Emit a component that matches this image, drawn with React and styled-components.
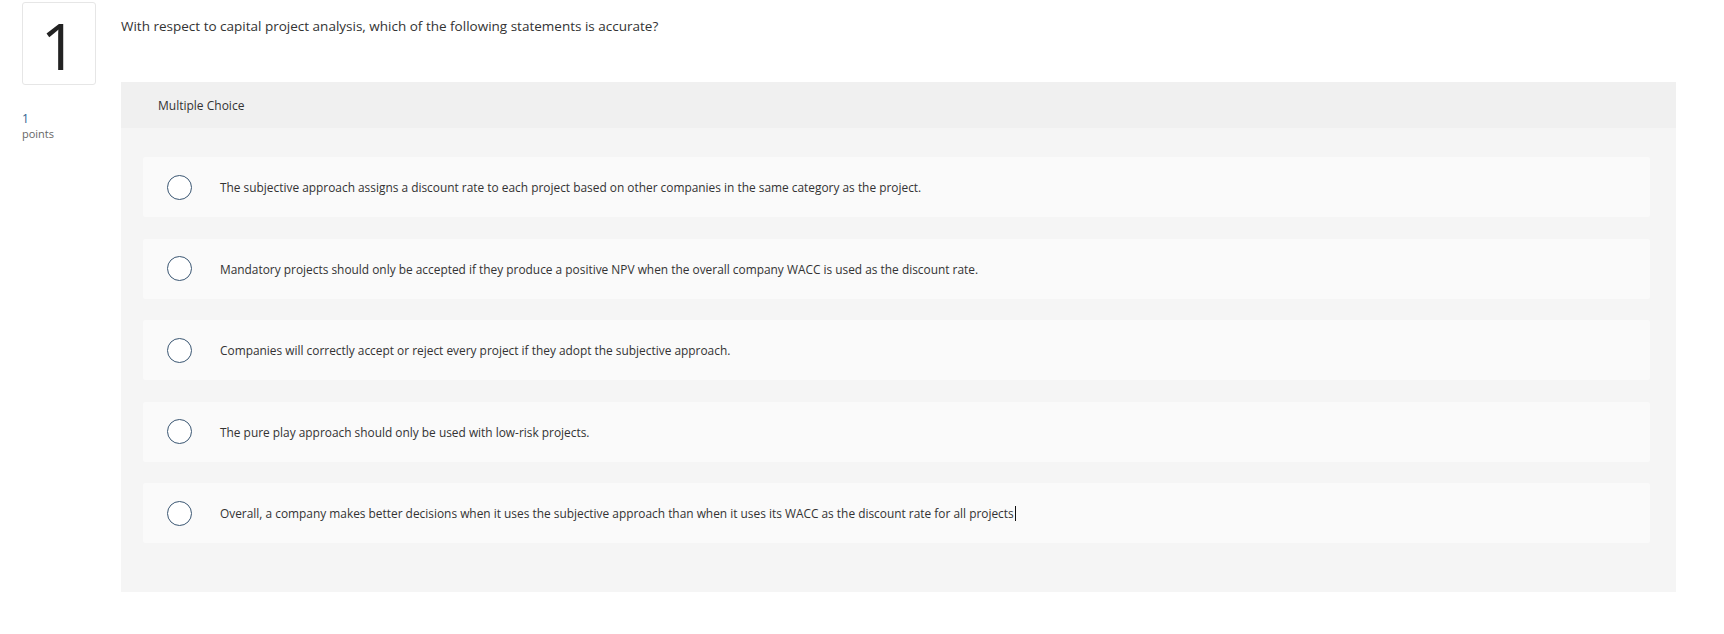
import React from "react";
import styled, { createGlobalStyle } from "styled-components";

const Global = createGlobalStyle`
  html, body { margin: 0; padding: 0; background: #ffffff; }
  body { font-family: "Open Sans", "Liberation Sans", sans-serif; color: #333333; }
`;

const Page = styled.div`
  display: flex;
  align-items: flex-start;
  width: 1724px;
  height: 634px;
  box-sizing: border-box;
  padding-right: 48px;
`;

const Side = styled.div`
  width: 121px;
  flex: none;
  box-sizing: border-box;
  padding: 2px 0 0 22px;
  display: flex;
  flex-direction: column;
`;

const NumberBox = styled.div`
  width: 74px;
  height: 83px;
  box-sizing: border-box;
  border: 1px solid #e6e6e6;
  border-radius: 3px;
  display: flex;
  align-items: center;
  justify-content: center;
  padding-top: 4px;
  font-family: "Open Sans", "Liberation Sans", sans-serif;
  font-weight: 400;
  font-size: 64px;
  line-height: 1;
  color: #222222;
`;

const Points = styled.div`
  margin-top: 26px;
  font-size: 11px;
  line-height: 15px;
  color: #666666;
`;

const PointsValue = styled.div`
  color: #2f5f8f;
  font-size: 12px;
`;

const Main = styled.div`
  flex: 1;
  display: flex;
  flex-direction: column;
`;

const Question = styled.div`
  height: 82px;
  box-sizing: border-box;
  padding-top: 18px;
  font-size: 13.5px;
  line-height: 17px;
  color: #333333;
`;

const Panel = styled.div`
  display: flex;
  flex-direction: column;
  background: #f5f5f5;
`;

const PanelHeader = styled.div`
  height: 46px;
  display: flex;
  align-items: center;
  padding-left: 37px;
  background: #f0f0f0;
  font-size: 12px;
  color: #333333;
`;

const Options = styled.div`
  display: flex;
  flex-direction: column;
  gap: 21.5px;
  padding: 29px 26px 49px 22px;
`;

const OptionCard = styled.label`
  height: 60px;
  display: flex;
  align-items: center;
  padding-left: 24px;
  background: #fafafa;
  border-radius: 2px;
  cursor: pointer;
`;

const Radio = styled.span`
  width: 25px;
  height: 25px;
  flex: none;
  box-sizing: border-box;
  border: 1.5px solid #3a5672;
  border-radius: 50%;
  background: #ffffff;
  margin-right: 28px;
`;

const OptionText = styled.span`
  font-size: 11.9px;
  line-height: 16px;
  color: #333333;
`;

const Caret = styled.span`
  display: inline-block;
  width: 1px;
  height: 15px;
  background: #111111;
  vertical-align: -3px;
  margin-left: 1px;
`;

const options = [
  "The subjective approach assigns a discount rate to each project based on other companies in the same category as the project.",
  "Mandatory projects should only be accepted if they produce a positive NPV when the overall company WACC is used as the discount rate.",
  "Companies will correctly accept or reject every project if they adopt the subjective approach.",
  "The pure play approach should only be used with low-risk projects.",
  "Overall, a company makes better decisions when it uses the subjective approach than when it uses its WACC as the discount rate for all projects",
];

export default function App() {
  return (
    <>
      <Global />
      <Page>
        <Side>
          <NumberBox>1</NumberBox>
          <Points>
            <PointsValue>1</PointsValue>
            points
          </Points>
        </Side>
        <Main>
          <Question>
            With respect to capital project analysis, which of the following statements is accurate?
          </Question>
          <Panel>
            <PanelHeader>Multiple Choice</PanelHeader>
            <Options>
              {options.map((o, i) => (
                <OptionCard key={i}>
                  <Radio />
                  <OptionText>
                    {o}
                    {i === options.length - 1 && <Caret />}
                  </OptionText>
                </OptionCard>
              ))}
            </Options>
          </Panel>
        </Main>
      </Page>
    </>
  );
}
